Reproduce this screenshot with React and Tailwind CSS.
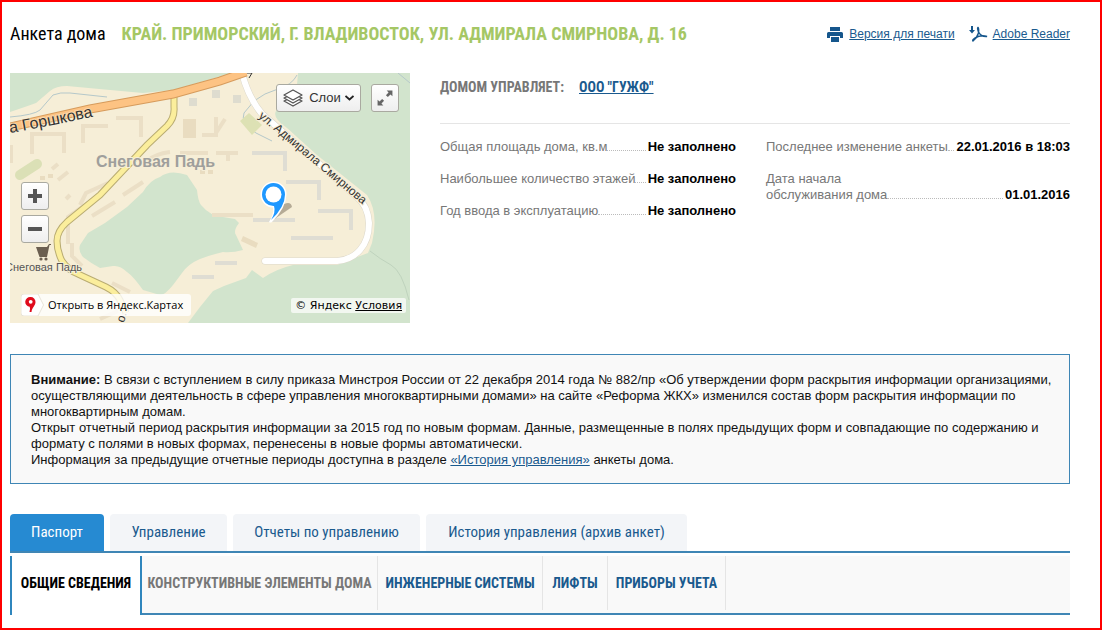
import React from 'react'

const FONT_DIN = "font-['Roboto_Condensed','Liberation_Sans_Narrow','Liberation_Sans',sans-serif]"

function MapCanvas() {
  return (
    <svg viewBox="0 0 400 250" className="block w-full h-full" aria-hidden="true">
      <rect width="400" height="250" fill="#f6eed7" />
      {/* parks */}
      <g fill="#d2e4cd">
        <path d="M0 0H222L205 5L163 17L133 20L100 17L57 13Q46 13 40 18L26 30Q15 34 0 39Z" />
        <path d="M288 0H400V250H178L190 234L203 218L214 213L236 205L242 197L253 205Q266 196 283 192H327L350 183L358 180L362 170Q369 140 357 122L307 82L277 55Q262 45 266 38L287 12Z" />
        <path d="M150 104Q160 96 177 102L187 117Q188 128 191 132Q200 143 213 144L225 146L229 150Q223 158 226 162L233 177Q222 180 213 179Q200 182 190 186Q178 191 172 200L163 212Q155 222 150 222L133 217Q123 203 117 199Q110 192 103 193L90 195Q82 191 73 184Q68 178 70 172L78 160L95 150L117 134L133 119Q140 107 150 104Z" />
      </g>
      {/* streams */}
      <g fill="none" stroke="#b5c8ca" strokeWidth="1">
        <path d="M0 44Q24 42 30 37L43 22Q50 19 60 20L97 24" />
        <path d="M287 2Q282 12 268 16T244 28L234 40Q230 50 246 60L262 68" />
        <path d="M388 0L400 10" />
        <path d="M360 178Q370 186 381 192T399 227" stroke="#bfd3bd" />
      </g>
      {/* buildings */}
      <g fill="none" stroke="#ebdfc6" strokeWidth="4">
        <path d="M1 72V90M22 81V61H54V80M73 70V53H98M106 45H131V64M137 88Q145 81 160 79M170 80H198M70 132L76 120L98 110M113 122L133 109M58 171V144L78 130M62 170V183L72 193M82 143L105 129M48 107L58 99" />
        <path d="M202 142H243M206 80H228M218 80V88M192 62H206V44M206 60L215 46" />
        <path d="M42 96L48 91M56 126L60 122M102 210L120 219M90 246L108 238" />
      </g>
      <g fill="none" stroke="#dfddd3" strokeWidth="4">
        <path d="M242 80H275V98M276 109H309V127M308 138H341V157M243 147H285M281 165H323M205 190H227M182 204H204" />
      </g>
      <g fill="#e9dcc0">
        <rect x="173" y="46" width="13" height="19" />
        <path d="M233 163L248 170L246 175L231 168Z" />
        <rect x="30" y="103" width="5" height="4" />
        <rect x="38" y="101" width="5" height="4" />
        <rect x="190" y="97" width="5" height="4" />
        <rect x="198" y="97" width="5" height="4" />
      </g>
      <g fill="#dedccf">
        <rect x="179" y="25" width="8" height="8" />
        <rect x="202" y="17" width="8" height="8" />
        <rect x="223" y="22" width="8" height="8" />
      </g>
      <path d="M10 102L27 91" stroke="#dbe0b6" strokeWidth="10" strokeLinecap="round" />
      <path d="M239 40L252 52L242 62L230 48Z" fill="#dde1b4" />
      {/* roads */}
      <path d="M255 188H327Q341 187 350 177T359 150Q358 133 347 124L252 41Q238 24 232 0" fill="none" stroke="#dcd8cb" strokeWidth="7" strokeLinecap="round" />
      <path d="M255 188H327Q341 187 350 177T359 150Q358 133 347 124L252 41Q238 24 232 0" fill="none" stroke="#ffffff" strokeWidth="6" strokeLinecap="round" />
      <path d="M164 20V34Q165 45 157 53L137 72L90 122L57 149Q47 158 47 168T52 188Q58 197 68 201L96 214Q106 219 110 227L116 240" fill="none" stroke="#b9ac72" strokeWidth="7" />
      <path d="M164 20V34Q165 45 157 53L137 72L90 122L57 149Q47 158 47 168T52 188Q58 197 68 201L96 214Q106 219 110 227L116 240" fill="none" stroke="#fbee9c" strokeWidth="5" />
      <path d="M-4 55L80 36L163 21L210 8L236 -1" fill="none" stroke="#d69b5c" strokeWidth="9" />
      <path d="M-4 55L80 36L163 21L210 8L236 -1" fill="none" stroke="#fdc383" strokeWidth="7" />
      {/* labels */}
      <defs>
        <path id="road-a" d="M0 60Q40 53 90 42" />
        <path id="road-b" d="M248 44L265 58L308 94L360 138" />
      </defs>
      <g className="font-['Liberation_Sans',sans-serif]" stroke="#f6eed7" strokeWidth="2" paintOrder="stroke" fill="#333">
        <text fontSize="16" strokeOpacity="0.5"><textPath href="#road-a">а Горшкова</textPath></text>
        <text fontSize="12"><textPath href="#road-b">ул. Адмирала Смирнова</textPath></text>
        <text x="86" y="94" fontSize="16" fontWeight="bold" fill="#9f9f9c">Снеговая Падь</text>
        <text x="-5" y="198" fontSize="11" fill="#555">Снеговая Падь</text>
        <text fontSize="12" transform="translate(114 250) rotate(-75)">о.</text>
      </g>
      <path d="M237 0H242L239 5" fill="none" stroke="#333" />
      {/* shop */}
      <g fill="#6b5f50">
        <path d="M26 174H37L39 171H41V172H39.500L37 184H29.500Z" />
        <circle cx="31" cy="186" r="1.600" />
        <circle cx="36" cy="186" r="1.600" />
      </g>
      {/* placemark */}
      <path d="M263 147L282 134Q281 128 274 131Z" fill="#8b7f6a" opacity="0.6" />
      <path d="M259 149Q264 141 263 134.500A13 13 0 1 1 276.500 121.500Q276 135 262 149Q260 150 259 149Z" fill="#fff" />
      <path d="M261 147Q266 139 264 133A11.500 11.500 0 1 1 275 121.500Q275 134 261 147Z" fill="#1e98ff" />
      <circle cx="263.500" cy="121.500" r="8" fill="#fff" />
    </svg>
  )
}

const MAP_BUTTON = 'flex items-center justify-center h-7 rounded-[3px] border border-[#a9a9a0] bg-gradient-to-b from-white to-[#eeeeee] text-[#555]'

function HouseMap() {
  return (
    <div className="relative w-[400px] h-[250px] shrink-0 overflow-hidden">
      <MapCanvas />
      <div className="absolute top-[11px] right-[11px] flex gap-[10px]">
        <button type="button" className={MAP_BUTTON + ' w-[85px] text-[13px]'}>
          <svg width="20" height="18" viewBox="0 0 20 18" fill="#fff" stroke="#555" strokeWidth="1.300" strokeLinejoin="round">
            <path d="M1 12L10 8L19 12L10 17Z" />
            <path d="M1 9L10 5L19 9L10 14Z" />
            <path d="M1 6L10 1L19 6L10 11Z" />
          </svg>
          <span className="ml-1.5 mr-1 text-[#333]">Слои</span>
          <svg width="9" height="6" viewBox="0 0 9 6" fill="none" stroke="#222" strokeWidth="1.800"><path d="M0.500 1L4.500 4.500L8.500 1" /></svg>
        </button>
        <button type="button" aria-label="Развернуть" className={MAP_BUTTON + ' w-7'}>
          <svg width="16" height="16" viewBox="0 0 14 14" fill="#666">
            <path d="M8.500 0.500H13.500V5.500L11.800 3.900L9.500 6.200L7.800 4.500L10.100 2.200Z" />
            <path d="M0.500 8.500V13.500H5.500L3.900 11.800L6.200 9.500L4.500 7.800L2.200 10.100Z" />
          </svg>
        </button>
      </div>
      <div className="absolute top-[109px] left-[11px] flex flex-col gap-[5px]">
        <button type="button" aria-label="Приблизить" className={MAP_BUTTON + ' w-7'}>
          <svg width="14" height="14" viewBox="0 0 14 14" stroke="#555" strokeWidth="4"><path d="M0 7H14M7 0V14" /></svg>
        </button>
        <button type="button" aria-label="Отдалить" className={MAP_BUTTON + ' w-7'}>
          <svg width="14" height="14" viewBox="0 0 14 14" stroke="#555" strokeWidth="4"><path d="M0 7H14" /></svg>
        </button>
      </div>
      <a href="#map" className="absolute bottom-[7px] left-[11px] flex items-center h-[22px] rounded-[3px] bg-white/80 pr-2 gap-1 text-[11px] text-black font-['Open_Sans','Noto_Sans',sans-serif]">
        <svg width="23" height="22" viewBox="0 0 23 22">
          <path d="M3 0H17L22.500 11L17 22H3Q0 22 0 19V3Q0 0 3 0Z" fill="#fff" stroke="#e3ded0" strokeWidth="0.800" />
          <path d="M9.500 3A4.800 4.800 0 0 1 14.500 8C14.500 12 11 13 10.500 18H8.500Q9.500 14 8.700 12.700A4.800 4.800 0 0 1 9.500 3Z" fill="#e00b1c" />
          <circle cx="9.700" cy="7.800" r="1.900" fill="#fff" />
        </svg>
        Открыть в Яндекс.Картах
      </a>
      <div className="absolute bottom-[10px] right-1 rounded-[2px] bg-white/70 px-1 text-[11px] leading-[15px] text-black font-['DejaVu_Sans',sans-serif]">
        © Яндекс <a href="#terms" className="underline">Условия</a>
      </div>
    </div>
  )
}

function Field({ label, value }) {
  return (
    <div className="flex items-end leading-4">
      <dt className="text-[#777] whitespace-pre-line">{label}</dt>
      <span className="flex-1 mb-1 border-b border-dotted border-[#bbb]" />
      <dd className="pl-0.5 font-bold text-black">{value}</dd>
    </div>
  )
}

const tabs = [
  { title: 'Паспорт', width: 'w-[94px]', active: true },
  { title: 'Управление', width: 'w-[117px]' },
  { title: 'Отчеты по управлению', width: 'w-[187px]' },
  { title: 'История управления (архив анкет)', width: 'w-[261px]' },
]

const sections = [
  { title: 'Конструктивные элементы дома', style: 'w-[236px] text-[#777]' },
  { title: 'Инженерные системы', style: 'w-[165px] text-[#1a5a8e]' },
  { title: 'Лифты', style: 'w-[65px] text-[#1a5a8e]' },
  { title: 'Приборы учета', style: 'w-[118px] text-[#1a5a8e]' },
]

export default function App() {
  return (
    <div className="min-h-screen border-2 border-[#f00] bg-white pl-2 pr-[30px] pt-4 text-[13px] font-['Liberation_Sans',sans-serif]">
      <header className="flex items-center justify-between h-8">
        <h1 className={FONT_DIN + ' flex items-center gap-4 text-[18px] leading-8 text-black whitespace-nowrap'}>
          Анкета дома
          <span className="font-bold uppercase text-[#a5c765]">край. Приморский, г. Владивосток, ул. Адмирала Смирнова, д. 16</span>
        </h1>
        <div className="flex items-center gap-[14px] text-[12px] text-[#1a5a8e] whitespace-nowrap">
          <a href="#print" className="flex items-center gap-[6px]">
            <svg width="16" height="15" viewBox="0 0 16 15" fill="#15568c">
              <path d="M3 0H13V4H3ZM1.500 5H14.500Q16 5 16 6.500V11H13V9H3V11H0V6.500Q0 5 1.500 5ZM4 10H12V15H4Z" />
            </svg>
            <span className="underline">Версия для печати</span>
          </a>
          <a href="#reader" className="flex items-center gap-[5px]">
            <svg width="19" height="16" viewBox="0 0 19 16" fill="none" stroke="#15568c" strokeWidth="1.500">
              <path d="M3 0V5" strokeWidth="2" />
              <path d="M0 4H6L3 7.500Z" fill="#15568c" stroke="none" />
              <path d="M4 15Q8 12 9.500 7Q10 2 9 1.500Q8 2 9.500 6Q12 11 18 10.500Q12 8.500 6 12Q3 14 4 15Z" />
            </svg>
            <span className="underline">Adobe Reader</span>
          </a>
        </div>
      </header>

      <div className="flex gap-[30px] mt-[23px]">
        <HouseMap />
        <div className="flex-1">
          <h2 className={FONT_DIN + ' flex gap-[15px] pb-[22px] border-b border-[#e5e5e5] text-[14px] leading-7 font-bold uppercase text-[#777]'}>
            Домом управляет:
            <a href="#company" className="text-[#1a5a8e] underline">ООО "ГУЖФ"</a>
          </h2>
          <div className="grid grid-cols-[296fr_304fr] gap-x-[30px] items-start pt-[15px]">
            <dl className="flex flex-col gap-4">
              <Field label="Общая площадь дома, кв.м" value="Не заполнено" />
              <Field label="Наибольшее количество этажей" value="Не заполнено" />
              <Field label="Год ввода в эксплуатацию" value="Не заполнено" />
            </dl>
            <dl className="flex flex-col gap-4">
              <Field label="Последнее изменение анкеты" value="22.01.2016 в 18:03" />
              <Field label={'Дата начала\nобслуживания дома'} value="01.01.2016" />
            </dl>
          </div>
        </div>
      </div>

      <section className="mt-[31px] border border-[#3f86b5] bg-[#f9f9f9] pl-5 pr-3 pt-[17px] pb-[15px] leading-4 text-[#111]">
        <p>
          <b>Внимание:</b> В связи с вступлением в силу приказа Минстроя России от 22 декабря 2014 года № 882/пр «Об утверждении форм раскрытия информации организациями, осуществляющими деятельность в сфере управления многоквартирными домами» на сайте «Реформа ЖКХ» изменился состав форм раскрытия информации по многоквартирным домам.
        </p>
        <p>Открыт отчетный период раскрытия информации за 2015 год по новым формам. Данные, размещенные в полях предыдущих форм и совпадающие по содержанию и формату с полями в новых формах, перенесены в новые формы автоматически.</p>
        <p>Информация за предыдущие отчетные периоды доступна в разделе <a href="#history" className="text-[#1a5a8e] underline">«История управления»</a> анкеты дома.</p>
      </section>

      <nav className={FONT_DIN + ' mt-[30px]'}>
        <div className="flex gap-[6px] border-b-2 border-[#3f86b5] text-[15px]">
          {tabs.map(function(tab) {
            return (
              <button key={tab.title} type="button" className={tab.width + ' h-[37px] rounded-t-[4px] whitespace-nowrap ' + (tab.active ? 'bg-[#268ad2] text-white' : 'bg-[#f3f5f8] text-[#1a5a8e]')}>
                {tab.title}
              </button>
            )
          })}
        </div>
        <div className="mt-[3px] flex h-[59px] text-[14px] font-bold">
          <button type="button" className="w-[132px] pb-1 border-x-2 border-[#2f86bd] bg-white uppercase whitespace-nowrap text-black">
            Общие сведения
          </button>
          <div className="flex flex-1 items-start border-b-2 border-[#3f86b5] bg-[#f9f9f9]">
            {sections.map(function(item) {
              return (
                <button key={item.title} type="button" className={item.style + ' h-[54px] border-r border-[#e5e5e5] uppercase whitespace-nowrap'}>
                  {item.title}
                </button>
              )
            })}
          </div>
        </div>
      </nav>
    </div>
  )
}
